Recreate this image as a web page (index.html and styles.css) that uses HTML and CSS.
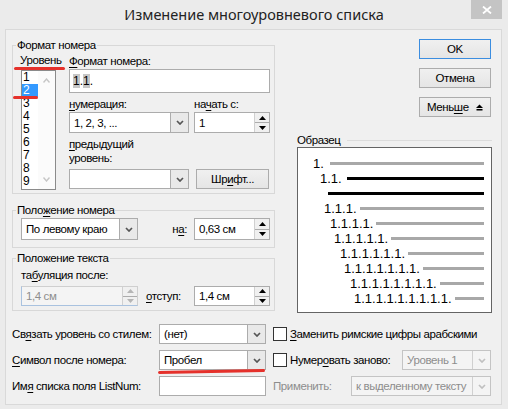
FILE: index.html
```html
<!DOCTYPE html>
<html lang="ru">
<head>
  <meta charset="UTF-8">
  <title>Изменение многоуровневого списка</title>
  <link rel="stylesheet" href="styles.css">
</head>
<body>
  <div class="titlebar">
    <div class="title">Изменение многоуровневого списка</div>
    <div class="close">
      <svg width="10" height="8" viewBox="0 0 10 8"><path d="M1 0.5 L9 7.5 M9 0.5 L1 7.5" stroke="#fff" stroke-width="1.8" fill="none"/></svg>
    </div>
  </div>

  <div class="panel">
    <div class="top">
      <div class="left-col">
        <fieldset class="group g-fmt">
          <legend>Формат номера</legend>
          <div class="fmt-body">
            <div class="level-col">
              <div class="level-label marked">Уровень</div>
              <div class="listbox">
                <div class="items">
                  <div class="item">1</div>
                  <div class="item selected">2</div>
                  <div class="item">3</div>
                  <div class="item">4</div>
                  <div class="item">5</div>
                  <div class="item">6</div>
                  <div class="item">7</div>
                  <div class="item">8</div>
                  <div class="item">9</div>
                </div>
                <div class="vscroll">
                  <svg width="7" height="5" viewBox="0 0 7 5"><path d="M0.5 4.5 L3.5 1 L6.5 4.5" stroke="#c6c6c6" stroke-width="1.4" fill="none"/></svg>
                  <svg width="7" height="5" viewBox="0 0 7 5"><path d="M0.5 0.5 L3.5 4 L6.5 0.5" stroke="#c6c6c6" stroke-width="1.4" fill="none"/></svg>
                </div>
              </div>
            </div>

            <div class="format-col">
              <div class="lbl first"><u>Ф</u>ормат номера:</div>
              <div class="textbox big"><span class="fld">1</span>.<span class="fld">1</span>.</div>

              <div class="pair lbl-row">
                <div><u>н</u>умерация:</div>
                <div>на<u>ч</u>ать с:</div>
              </div>
              <div class="pair">
                <div class="combo h21">
                  <div class="val">1, 2, 3, ...</div>
                  <div class="drop"><svg width="8" height="5" viewBox="0 0 8 5"><path d="M1 1 L4 4 L7 1" stroke="#555" stroke-width="1.7" fill="none"/></svg></div>
                </div>
                <div class="spin h21">
                  <div class="val">1</div>
                  <div class="arrows">
                    <div class="up"><svg width="7" height="4" viewBox="0 0 7 4"><path d="M0 4 L3.5 0 L7 4 Z" fill="#000"/></svg></div>
                    <div class="dn"><svg width="7" height="4" viewBox="0 0 7 4"><path d="M0 0 L3.5 4 L7 0 Z" fill="#000"/></svg></div>
                  </div>
                </div>
              </div>

              <div class="lbl prev"><u>п</u>редыдущий<br>уровень:</div>
              <div class="pair">
                <div class="combo h20">
                  <div class="val"></div>
                  <div class="drop"><svg width="8" height="5" viewBox="0 0 8 5"><path d="M1 1 L4 4 L7 1" stroke="#555" stroke-width="1.7" fill="none"/></svg></div>
                </div>
                <button class="btn font-btn">Шр<u>и</u>фт...</button>
              </div>
            </div>
          </div>
        </fieldset>

        <fieldset class="group g-pos">
          <legend>Поло<u>ж</u>ение номера</legend>
          <div class="trio">
            <div class="combo h22">
              <div class="val">По левому краю</div>
              <div class="drop"><svg width="8" height="5" viewBox="0 0 8 5"><path d="M1 1 L4 4 L7 1" stroke="#555" stroke-width="1.7" fill="none"/></svg></div>
            </div>
            <div class="at-lbl">н<u>а</u>:</div>
            <div class="spin h22">
              <div class="val">0,63 см</div>
              <div class="arrows">
                <div class="up"><svg width="7" height="4" viewBox="0 0 7 4"><path d="M0 4 L3.5 0 L7 4 Z" fill="#000"/></svg></div>
                <div class="dn"><svg width="7" height="4" viewBox="0 0 7 4"><path d="M0 0 L3.5 4 L7 0 Z" fill="#000"/></svg></div>
              </div>
            </div>
          </div>
        </fieldset>

        <fieldset class="group g-txt">
          <legend>Положение текста</legend>
          <div class="tab-lbl">та<u>б</u>уляция после:</div>
          <div class="trio">
            <div class="spin h20 disabled">
              <div class="val">1,4 см</div>
              <div class="arrows">
                <div class="up"><svg width="7" height="4" viewBox="0 0 7 4"><path d="M0 4 L3.5 0 L7 4 Z" fill="#b5b5b5"/></svg></div>
                <div class="dn"><svg width="7" height="4" viewBox="0 0 7 4"><path d="M0 0 L3.5 4 L7 0 Z" fill="#b5b5b5"/></svg></div>
              </div>
            </div>
            <div class="indent-lbl"><u>о</u>тступ:</div>
            <div class="spin h20">
              <div class="val">1,4 см</div>
              <div class="arrows">
                <div class="up"><svg width="7" height="4" viewBox="0 0 7 4"><path d="M0 4 L3.5 0 L7 4 Z" fill="#000"/></svg></div>
                <div class="dn"><svg width="7" height="4" viewBox="0 0 7 4"><path d="M0 0 L3.5 4 L7 0 Z" fill="#000"/></svg></div>
              </div>
            </div>
          </div>
        </fieldset>
      </div>

      <div class="right-col">
        <div class="buttons">
          <button class="btn default">OK</button>
          <button class="btn">Отмена</button>
          <button class="btn less"><span>Мень<u>ш</u>е</span>
            <svg width="7" height="7" viewBox="0 0 7 7"><path d="M0 4 L3.5 0.5 L7 4 Z" fill="#000"/><rect x="0.5" y="5" width="6" height="1.5" fill="#000"/></svg>
          </button>
        </div>

        <div class="sample-head">
          <span>Образец</span>
          <div class="rule"></div>
        </div>
        <div class="sample-box">
          <div class="srow lv1"><span class="num">1.</span><div class="bar"></div></div>
          <div class="srow lv2"><span class="num">1.1.</span><div class="bar dark wide"></div></div>
          <div class="srow lv0"><div class="bar dark"></div></div>
          <div class="srow lv3"><span class="num">1.1.1.</span><div class="bar"></div></div>
          <div class="srow lv4"><span class="num">1.1.1.1.</span><div class="bar"></div></div>
          <div class="srow lv5"><span class="num">1.1.1.1.1.</span><div class="bar"></div></div>
          <div class="srow lv6"><span class="num">1.1.1.1.1.1.</span><div class="bar"></div></div>
          <div class="srow lv7"><span class="num">1.1.1.1.1.1.1.</span><div class="bar"></div></div>
          <div class="srow lv8"><span class="num">1.1.1.1.1.1.1.1.</span><div class="bar"></div></div>
          <div class="srow lv9"><span class="num">1.1.1.1.1.1.1.1.1.</span><div class="bar"></div></div>
        </div>
      </div>
    </div>

    <div class="bottom">
      <div class="blbl">Св<u>я</u>зать уровень со стилем:</div>
      <div class="combo h20">
        <div class="val">(нет)</div>
        <div class="drop"><svg width="8" height="5" viewBox="0 0 8 5"><path d="M1 1 L4 4 L7 1" stroke="#555" stroke-width="1.7" fill="none"/></svg></div>
      </div>
      <div class="bright">
        <span class="check"></span>
        <span><u>З</u>аменить римские цифры арабскими</span>
      </div>

      <div class="blbl"><u>С</u>имвол после номера:</div>
      <div class="combo h20 marked">
        <div class="val">Пробел</div>
        <div class="drop"><svg width="8" height="5" viewBox="0 0 8 5"><path d="M1 1 L4 4 L7 1" stroke="#555" stroke-width="1.7" fill="none"/></svg></div>
      </div>
      <div class="bright">
        <span class="check"></span>
        <span>Нумер<u>о</u>вать заново:</span>
        <div class="combo h21 disabled restart">
          <div class="val">Уровень 1</div>
          <div class="drop"><svg width="8" height="5" viewBox="0 0 8 5"><path d="M1 1 L4 4 L7 1" stroke="#c0c0c0" stroke-width="1.7" fill="none"/></svg></div>
        </div>
      </div>

      <div class="blbl">Им<u>я</u> списка поля ListNum:</div>
      <div class="textbox h20"></div>
      <div class="bright">
        <span class="muted">Применить:</span>
        <div class="combo h20 disabled apply">
          <div class="val">к выделенному тексту</div>
          <div class="drop"><svg width="8" height="5" viewBox="0 0 8 5"><path d="M1 1 L4 4 L7 1" stroke="#c0c0c0" stroke-width="1.7" fill="none"/></svg></div>
        </div>
      </div>
    </div>
  </div>
</body>
</html>
```

FILE: styles.css
```css
* {
  box-sizing: border-box;
}

body {
  margin: 0;
  width: 508px;
  height: 409px;
  overflow: hidden;
  background: #ebebeb;
  font-family: "Liberation Sans", Arial, sans-serif;
  font-size: 11.5px;
  letter-spacing: -0.4px;
  color: #000;
}

u {
  text-decoration-thickness: 1px;
  text-underline-offset: 2px;
}

/* title bar */
.titlebar {
  height: 29px;
  display: grid;
  grid-template-columns: 1fr auto 1fr;
}

.title {
  grid-column: 2;
  font-family: "Noto Sans", sans-serif;
  font-size: 14.5px;
  letter-spacing: 0;
  line-height: 29px;
  color: #222;
}

.close {
  grid-column: 3;
  justify-self: end;
  margin-right: 6px;
  width: 31px;
  height: 19px;
  background: #c4c4c4;
  display: flex;
  align-items: center;
  justify-content: center;
}

/* main panel */
.panel {
  margin: 0 6px 0 5px;
  height: 376px;
  background: #f0f0f0;
  border: 1px solid #d9d9d9;
  padding: 0 9px 0 6px;
}

.top {
  display: flex;
  justify-content: space-between;
  height: 283px;
}

.left-col {
  width: 263px;
  padding-top: 8px;
}

.group {
  margin: 0;
  padding: 0;
  border: 1px solid #d8d8d8;
  min-width: 0;
}

.group legend {
  padding: 0 1px;
  margin-left: 3px;
  line-height: 14px;
}

.g-fmt {
  height: 156px;
}

.g-pos {
  height: 45px;
  margin-top: 9px;
}

.g-txt {
  height: 60px;
  margin-top: 3px;
}

.fmt-body {
  display: flex;
  padding-left: 8px;
}

.level-col {
  width: 35px;
}

.level-label {
  margin-top: 1px;
  margin-left: -1px;
  line-height: 14px;
  white-space: nowrap;
}

.marked {
  position: relative;
}

.marked::after {
  content: "";
  position: absolute;
  height: 3px;
  border-radius: 2px;
  background: #e5312b;
}

.level-label.marked::after {
  left: -6px;
  right: -9px;
  bottom: -3px;
}

.listbox {
  margin-top: 3px;
  height: 120px;
  border: 1px solid #8b8b8b;
  background: #fff;
  display: flex;
}

.items {
  width: 16px;
  font-size: 12px;
  letter-spacing: 0;
}

.item {
  height: 13px;
  line-height: 13px;
  padding-left: 1px;
}

.item.selected {
  background: #3399ff;
  color: #fff;
  position: relative;
}

.item.selected::after {
  content: "";
  position: absolute;
  left: -9px;
  width: 25px;
  bottom: -2px;
  height: 3px;
  border-radius: 2px;
  background: #e5312b;
}

.vscroll {
  flex: 1;
  display: flex;
  flex-direction: column;
  justify-content: space-between;
  align-items: center;
  padding: 7px 0 7px;
  background: #fbfbfb;
}

.format-col {
  width: 201px;
  margin-left: 13px;
}

.lbl.first {
  margin-top: 3px;
  line-height: 13px;
}

.textbox {
  background: #fff;
  border: 1px solid #acacac;
}

.textbox.big {
  height: 24px;
  margin-top: 1px;
  padding-left: 3px;
  line-height: 22px;
  font-size: 12px;
  letter-spacing: 0;
}

.fld {
  background: #c6c6c6;
}

.pair {
  display: grid;
  grid-template-columns: 120px 76px;
  column-gap: 5px;
  margin-top: 1px;
}

.pair.lbl-row {
  margin-top: 4px;
  line-height: 14px;
}

.lbl.prev {
  margin-top: 4px;
  line-height: 14px;
}

.lbl.prev + .pair {
  margin-top: 4px;
}

/* combo boxes and spinners */
.combo, .spin {
  display: flex;
  background: #fff;
  border: 1px solid #acacac;
}

.h20 { height: 20px; }
.h21 { height: 21px; }
.h22 { height: 22px; }

.combo .val, .spin .val {
  flex: 1;
  padding-left: 4px;
  display: flex;
  align-items: center;
  white-space: nowrap;
  overflow: hidden;
}

.combo .drop {
  width: 18px;
  background: #e9e9e9;
  border-left: 1px solid #acacac;
  display: flex;
  align-items: center;
  justify-content: center;
}

.spin .arrows {
  width: 15px;
  display: flex;
  flex-direction: column;
  background: #f0f0f0;
  border-left: 1px solid #d0d0d0;
}

.spin .arrows div {
  flex: 1;
  display: flex;
  align-items: center;
  justify-content: center;
}

.spin .arrows .up {
  border-bottom: 1px solid #acacac;
}

.disabled {
  background: #f4f4f4;
  color: #8d8d8d;
}

.spin.disabled {
  border-color: #cfcfcf #cfcfcf #a9c2df #a9c2df;
}

.combo.disabled {
  border-color: #c4c4c4;
}

.combo.disabled .drop {
  background: #f4f4f4;
  border-left-color: #d0d0d0;
}

/* buttons */
.btn {
  font-family: inherit;
  font-size: 11.5px;
  letter-spacing: -0.4px;
  color: #000;
  height: 20px;
  width: 72px;
  padding: 0;
  border: 1px solid #acacac;
  background: linear-gradient(#f0f0f0, #e5e5e5);
}

.btn.default {
  border-color: #3b8de0;
}

.font-btn {
  width: 73px;
  margin-left: 2px;
}

.trio {
  display: grid;
  grid-template-columns: 117px 1fr 76px;
  padding-left: 8px;
  padding-right: 4px;
}

.g-pos .trio {
  margin-top: 1px;
}

.at-lbl {
  justify-self: end;
  align-self: center;
  padding-right: 7px;
}

.tab-lbl {
  margin-top: 3px;
  padding-left: 8px;
  line-height: 14px;
}

.g-txt .trio {
  margin-top: 4px;
}

.indent-lbl {
  align-self: center;
  padding-left: 8px;
}

/* right column */
.right-col {
  width: 195px;
}

.buttons {
  display: flex;
  flex-direction: column;
  align-items: flex-end;
  gap: 9px;
  padding-top: 9px;
  margin-right: 1px;
}

.btn.less {
  display: flex;
  align-items: center;
  padding-left: 7px;
  gap: 7px;
}

.sample-head {
  margin-top: 16px;
  height: 14px;
  display: flex;
  align-items: center;
}

.sample-head .rule {
  flex: 1;
  margin-left: 6px;
  border-top: 1px solid #dcdcdc;
}

.sample-box {
  height: 166px;
  background: #fff;
  border: 1px solid #646464;
  padding: 8px 7px 0 0;
}

.srow {
  height: 15px;
  display: flex;
  align-items: center;
}

.num {
  font-family: "Liberation Sans", sans-serif;
  font-size: 13px;
  letter-spacing: 0;
  line-height: 15px;
}

.bar {
  flex: 1;
  height: 3px;
  margin-left: 3px;
  background: #a8a8a8;
}

.bar.dark {
  background: #000;
}

.bar.wide {
  margin-left: 5px;
}

.lv1 { padding-left: 15px; }
.lv1 .bar { margin-left: 6px; }
.lv2 { padding-left: 22px; }
.lv0 { padding-left: 27px; }
.lv3 { padding-left: 26px; }
.lv4 { padding-left: 32px; }
.lv5 { padding-left: 36px; }
.lv6 { padding-left: 42px; }
.lv7 { padding-left: 46px; }
.lv8 { padding-left: 52px; }
.lv9 { padding-left: 56px; }

/* bottom rows */
.bottom {
  margin-top: 11px;
  display: grid;
  grid-template-columns: 147px 107px 1fr;
  grid-auto-rows: 20px;
  row-gap: 6px;
  align-items: center;
}

.bottom .combo, .bottom .textbox {
  height: 20px;
}

.combo.marked::after {
  left: -2px;
  right: 0;
  bottom: -4px;
  transform: rotate(-1.2deg);
}

.bright {
  display: flex;
  align-items: center;
  padding-left: 7px;
  margin-right: 1px;
  white-space: nowrap;
}

.check {
  width: 14px;
  height: 14px;
  background: #fff;
  border: 1px solid #333;
  margin-right: 3px;
}

.muted {
  color: #8d8d8d;
}

.restart {
  margin-left: auto;
  width: 89px;
}

.apply {
  margin-left: auto;
  width: 140px;
}
```
